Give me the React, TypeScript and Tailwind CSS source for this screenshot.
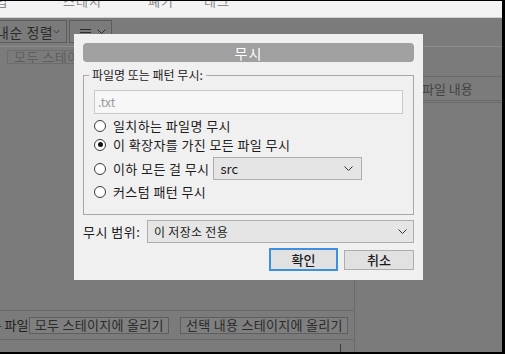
import React from 'react'

function Chevron({ className = '' }: { className?: string }) {
  return (
    <svg width="9" height="5" viewBox="0 0 9 5" fill="none" className={className}>
      <polyline points="0.5,0.5 4.5,4.5 8.5,0.5" stroke="currentColor" strokeWidth="1" />
    </svg>
  )
}

function Radio({ checked, label }: { checked?: boolean; label: string }) {
  return (
    <div className="flex items-center gap-[7px]">
      <span className="w-[12px] h-[12px] rounded-full border border-[#3a3a3a] bg-white flex items-center justify-center shrink-0">
        {checked && <span className="w-[5px] h-[5px] rounded-full bg-[#111]" />}
      </span>
      <span className="whitespace-nowrap text-[13px] tracking-[0.4px]">{label}</span>
    </div>
  )
}

function Dialog() {
  return (
    <div className="absolute left-[74px] top-[34px] w-[349px] h-[246px] bg-[#f0f0f0] px-[9px] pt-[9px] text-[12px] leading-[16px] text-[#1b1b1b]">
      {/* title */}
      <div className="h-[19px] rounded-[4px] bg-[#a0a0a0] flex items-center justify-center text-white text-[14px] tracking-[1px]">
        무시
      </div>

      {/* group box */}
      <div className="relative mt-[13px] h-[140px] border border-[#a8a8a8] px-[10px] pt-[14px]">
        <span className="absolute -top-[9px] left-[5px] px-[3px] bg-[#f0f0f0] text-[12px] leading-[16px] text-[#222]">
          파일명 또는 패턴 무시:
        </span>
        <div className="h-[24px] border border-[#c9c9c9] bg-[#f7f7f7] flex items-center pl-[3px] text-[#9a9a9a]">
          .txt
        </div>
        <div className="mt-[3px] h-[18px] flex items-center">
          <Radio label="일치하는 파일명 무시" />
        </div>
        <div className="h-[19px] flex items-center">
          <Radio checked label="이 확장자를 가진 모든 파일 무시" />
        </div>
        <div className="mt-[3px] h-[23px] flex items-center gap-[4px]">
          <Radio label="이하 모든 걸 무시" />
          <div className="w-[149px] h-[23px] border border-[#adadad] bg-[#e5e5e5] flex items-center justify-between pl-[6px] pr-[8px] text-[13px]">
            <span>src</span>
            <Chevron className="text-[#333]" />
          </div>
        </div>
        <div className="mt-[2px] h-[19px] flex items-center">
          <Radio label="커스텀 패턴 무시" />
        </div>
      </div>

      {/* scope */}
      <div className="mt-[5px] flex items-center">
        <span className="w-[64px] shrink-0 text-[13px] tracking-[0.5px]">무시 범위:</span>
        <div className="flex-1 h-[23px] border border-[#adadad] bg-[#e5e5e5] flex items-center justify-between pl-[6px] pr-[6px] text-[12px] tracking-[0.3px]">
          <span>이 저장소 전용</span>
          <Chevron className="text-[#333]" />
        </div>
      </div>

      {/* buttons */}
      <div className="mt-[5px] h-[23px] flex items-center justify-end gap-[6px]">
        <button className="w-[69px] h-[23px] border-2 border-[#3d8fe0] bg-[#e1e1e1] font-medium text-[13px]">확인</button>
        <button className="w-[70px] h-[20px] border border-[#adadad] bg-[#e1e1e1] font-medium text-[13px]">취소</button>
      </div>
    </div>
  )
}

export default function App() {
  return (
    <div className="relative w-[505px] h-[354px] bg-black overflow-hidden pt-[1px] pr-[3px] pb-[2px] font-['Noto_Sans_CJK_KR','Noto_Sans',sans-serif]">
      <div className="h-full flex flex-col bg-[#7b7b7b]">
        {/* top tabs (cut off) */}
        <div className="h-[17px] shrink-0 bg-[#f3f3f3] border-b border-[#d2d2d2] overflow-hidden">
          <div className="flex -mt-[9px] text-[13px] leading-[18px] text-[#8a8a8a] tracking-[1px]">
            <span className="w-[63px] -ml-[4px]">압</span>
            <span className="w-[85px] pl-[4px]">스테시</span>
            <span className="w-[56px] pl-[4px]">폐기</span>
            <span className="pl-[4px]">태그</span>
          </div>
        </div>

        {/* toolbar */}
        <div className="h-[29px] shrink-0 flex items-start pt-[2px] gap-[2px] border-b border-[#8c8c8c] text-[14px] leading-[18px] text-[#2b2b2b]">
          <div className="-ml-[6px] w-[73px] h-[23px] border border-[#5c5c5c] flex items-center justify-between pl-[1px] pr-[6px]">
            <span className="whitespace-nowrap tracking-[0.5px]">내순 정렬</span>
            <Chevron className="text-[#2b2b2b]" />
          </div>
          <div className="w-[43px] h-[23px] border border-[#5c5c5c] flex items-center justify-between pl-[8px] pr-[5px]">
            <span className="text-[15px]">≡</span>
            <Chevron className="text-[#2b2b2b]" />
          </div>
        </div>

        {/* main area */}
        <div className="flex-1 flex">
          <div className="w-[355px] flex flex-col border-r border-[#6a6a6a]">
            <div className="pt-[3px] pl-[7px]">
              <div className="w-[90px] h-[14px] border border-[#6d6d6d] flex items-center pl-[6px] text-[13px] leading-[14px] text-[#5e5e5e] whitespace-nowrap overflow-hidden tracking-[0.5px]">
                모두 스테이지에
              </div>
            </div>
            <div className="flex-1" />
            <div className="h-[30px] border-t border-[#6a6a6a] border-b flex items-center text-[13px] leading-[16px] text-[#1f1f1f]">
              <span className="-ml-[3px] mr-[1px] whitespace-nowrap">- 파일</span>
              <div className="w-[140px] h-[17px] border border-[#5e5e5e] bg-[#7f7f7f] flex items-center justify-center text-[#2b2b2b] whitespace-nowrap tracking-[0.3px]">
                모두 스테이지에 올리기
              </div>
              <div className="ml-[11px] w-[168px] h-[17px] border border-[#5e5e5e] bg-[#7f7f7f] flex items-center justify-center text-[#2b2b2b] whitespace-nowrap tracking-[0.3px]">
                선택 내용 스테이지에 올리기
              </div>
            </div>
            <div className="h-[12px] flex justify-end pr-[13px]">
              <span className="w-[1px] h-[8px] mt-[4px] bg-[#3a3a3a]" />
            </div>
          </div>
          <div className="flex-1 flex flex-col">
            <div className="h-[29px] shrink-0" />
            <div className="h-[25px] border-t border-[#6a6a6a] border-b flex items-center pl-[67px] text-[13px] leading-[16px] text-[#444] whitespace-nowrap">
              파일 내용
            </div>
            <div className="h-[1px] mt-[1px] bg-[#6a6a6a]" />
          </div>
        </div>
      </div>

      <Dialog />
    </div>
  )
}
